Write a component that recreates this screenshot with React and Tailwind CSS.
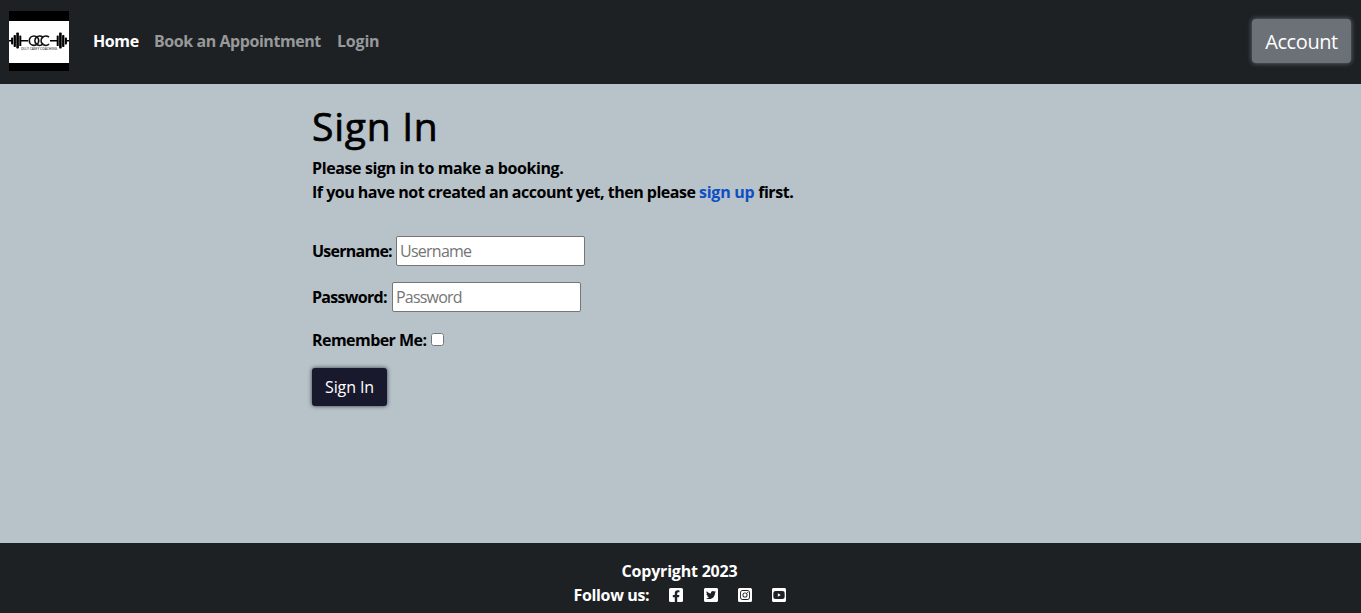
import { FaFacebookSquare, FaTwitterSquare, FaInstagramSquare, FaYoutubeSquare } from "react-icons/fa";

function Plates({ x, flip }) {
  return (
    <g transform={flip ? `translate(${x} 0) scale(-1 1)` : `translate(${x} 0)`}>
      <rect x="0" y="29" width="3" height="1.5" />
      <rect x="2.1" y="26.5" width="2" height="7" rx="0.7" />
      <rect x="4.6" y="24" width="2.3" height="12" rx="0.8" />
      <rect x="7.3" y="21.5" width="2.6" height="16" rx="0.8" />
      <rect x="10.3" y="24.5" width="2" height="10.5" rx="0.6" />
      <rect x="12" y="29" width="7" height="1.5" />
    </g>
  );
}

function Logo() {
  return (
    <svg className="block size-[60px]" viewBox="0 0 60 60" role="img">
      <rect width="60" height="60" fill="#000" />
      <rect y="10" width="60" height="42" fill="#fff" />
      <Plates x={0} />
      <Plates x={60} flip />
      <g fill="none" stroke="#111" strokeWidth="1.7">
        <circle cx="25" cy="29.7" r="4.7" />
        <path d="M33.8 26.2a4.7 4.7 0 1 0 0 7" />
        <path d="M40 26.2a4.7 4.7 0 1 0 0 7" />
      </g>
      <text x="12" y="39.2" fontSize="2.8" fontWeight="600" fontFamily="Open Sans, sans-serif" textLength="36" lengthAdjust="spacingAndGlyphs" fill="#333">
        OLLY CASEY COACHING
      </text>
    </svg>
  );
}

const socials = [FaFacebookSquare, FaTwitterSquare, FaInstagramSquare, FaYoutubeSquare];

export default function App() {
  return (
    <div className="flex h-[613px] flex-col overflow-hidden bg-[#b7c2c9] font-['Open_Sans',sans-serif] text-base font-bold leading-6 text-black">
      <header className="flex h-[84px] shrink-0 items-center bg-[#1d2124] pl-[9px] pr-[10px]">
        <div className="pb-[2px]">
          <Logo />
        </div>
        <nav className="ml-6 flex gap-4 pb-[2px] text-[#97999b]">
          <a className="w-[45px] whitespace-nowrap tracking-[-0.4px] text-white">Home</a>
          <a className="w-[167px] whitespace-nowrap tracking-[-0.44px]">Book an Appointment</a>
          <a className="whitespace-nowrap tracking-[-0.2px]">Login</a>
        </nav>
        <button className="ml-auto mb-[2px] flex h-11 w-[99px] items-center justify-center rounded bg-[#6c7077] pt-px text-xl font-normal tracking-[-0.4px] text-white shadow-[0_0_5px_#6c757d]">
          Account
        </button>
      </header>

      <main className="grow pl-[312px] pt-[18px]">
        <h1 className="text-[39px] font-medium leading-12 tracking-[0.75px] [-webkit-text-stroke:0.7px_black]">Sign In</h1>
        <p className="mt-[6px] whitespace-nowrap">
          <span className="tracking-[-0.39px]">Please sign in to make a booking.</span>
          <br />
          <span className="tracking-[-0.5px]">If you have not created an account yet, then please </span>
          <a className="tracking-[-0.25px] text-[#0d4fc4]">sign up</a>
          <span className="tracking-[-0.45px]"> first.</span>
        </p>
        <form className="mt-8">
          <div className="flex h-[30px] items-center">
            <label className="w-[84px] whitespace-nowrap tracking-[-0.75px]">Username:</label>
            <input className="h-[30px] w-[189px] rounded-[2px] border border-[#767676] bg-white px-[3px] font-normal tracking-[-0.75px] placeholder:text-[#757575]" placeholder="Username" />
          </div>
          <div className="mt-4 flex h-[30px] items-center">
            <label className="w-[80px] whitespace-nowrap tracking-[-0.7px]">Password:</label>
            <input type="password" className="h-[30px] w-[189px] rounded-[2px] border border-[#767676] bg-white px-[3px] font-normal tracking-[-0.8px] placeholder:text-[#757575]" placeholder="Password" />
          </div>
          <div className="mt-4 flex h-6 items-center">
            <label className="w-[119px] whitespace-nowrap tracking-[-0.55px]">Remember Me:</label>
            <input type="checkbox" className="mb-[2px] size-[13px]" />
          </div>
          <button type="button" className="mt-4 flex h-[38px] w-[75px] items-center justify-center rounded-[3px] bg-[#19192d] font-normal tracking-[-0.1px] text-white shadow-[0_0_4px_#343a40]">
            Sign In
          </button>
        </form>
      </main>

      <footer className="flex h-[70px] shrink-0 flex-col items-center bg-[#1d2124] pt-4 text-white">
        <p className="pr-[2px] tracking-[-0.2px]">Copyright 2023</p>
        <div className="flex items-center">
          <span className="mr-[19px] whitespace-nowrap tracking-[-0.35px]">Follow us:</span>
          <div className="flex gap-[18.4px]">
            {socials.map((Icon, i) => (
              <Icon key={i} className="size-4" />
            ))}
          </div>
        </div>
      </footer>
    </div>
  );
}
